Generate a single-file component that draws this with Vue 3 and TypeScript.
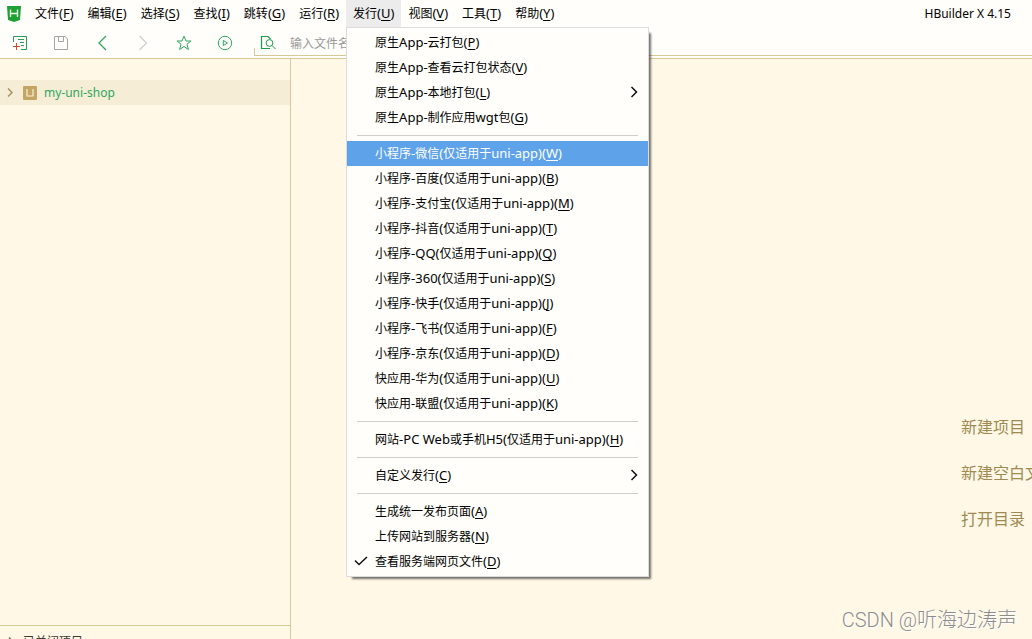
<script setup lang="ts">
import { ref } from 'vue'

interface Command {
  label: string
  key: string
  submenu?: boolean
  checked?: boolean
  active?: boolean
}

interface Run {
  text: string
  latin: boolean
}

const menus: Command[] = [
  { label: '文件', key: 'F' },
  { label: '编辑', key: 'E' },
  { label: '选择', key: 'S' },
  { label: '查找', key: 'I' },
  { label: '跳转', key: 'G' },
  { label: '运行', key: 'R' },
  { label: '发行', key: 'U', active: true },
  { label: '视图', key: 'V' },
  { label: '工具', key: 'T' },
  { label: '帮助', key: 'Y' },
]

const groups: Command[][] = [
  [
    { label: '原生App-云打包', key: 'P' },
    { label: '原生App-查看云打包状态', key: 'V' },
    { label: '原生App-本地打包', key: 'L', submenu: true },
    { label: '原生App-制作应用wgt包', key: 'G' },
  ],
  [
    { label: '小程序-微信(仅适用于uni-app)', key: 'W', active: true },
    { label: '小程序-百度(仅适用于uni-app)', key: 'B' },
    { label: '小程序-支付宝(仅适用于uni-app)', key: 'M' },
    { label: '小程序-抖音(仅适用于uni-app)', key: 'T' },
    { label: '小程序-QQ(仅适用于uni-app)', key: 'Q' },
    { label: '小程序-360(仅适用于uni-app)', key: 'S' },
    { label: '小程序-快手(仅适用于uni-app)', key: 'J' },
    { label: '小程序-飞书(仅适用于uni-app)', key: 'F' },
    { label: '小程序-京东(仅适用于uni-app)', key: 'D' },
    { label: '快应用-华为(仅适用于uni-app)', key: 'U' },
    { label: '快应用-联盟(仅适用于uni-app)', key: 'K' },
  ],
  [{ label: '网站-PC Web或手机H5(仅适用于uni-app)', key: 'H' }],
  [{ label: '自定义发行', key: 'C', submenu: true }],
  [
    { label: '生成统一发布页面', key: 'A' },
    { label: '上传网站到服务器', key: 'N' },
    { label: '查看服务端网页文件', key: 'D', checked: true },
  ],
]

const startLinks: string[] = ['新建项目', '新建空白文件', '打开目录']
const query = ref('')

// Latin runs are set one pixel larger than the Chinese text around them.
function runs(label: string): Run[] {
  const parts = label.match(/[\x20-\x7e]+|[^\x20-\x7e]+/g) ?? []
  return parts.map((text) => ({ text, latin: /^[\x20-\x7e]/.test(text) }))
}
</script>

<template>
  <div class="window">
    <header class="menubar">
      <svg class="logo" width="14" height="16" viewBox="0 0 14 16" aria-hidden="true">
        <path d="M0 0H14L13 14L7 16L1 14Z" fill="#1fa035" />
        <path d="M3.5 3.5V11M10.5 3.5V11M3.5 7.5H10.5" fill="none" stroke="#e9f8e4" stroke-width="1.4" />
      </svg>
      <nav class="menus">
        <div v-for="menu in menus" :key="menu.key" class="menu">
          <button type="button" class="menu-button" :class="{ open: menu.active }">{{ menu.label }}<span class="latin">(<u>{{ menu.key }}</u>)</span></button>
          <div v-if="menu.active" class="popup" role="menu">
            <div v-for="(group, index) in groups" :key="index" class="group">
              <button
                v-for="item in group"
                :key="item.key"
                type="button"
                role="menuitem"
                class="item"
                :class="{ selected: item.active }"
              >
                <span class="mark">
                  <svg v-if="item.checked" width="14" height="10" viewBox="0 0 14 10" aria-hidden="true">
                    <path d="M1 4.5L5 8.5L13 1" fill="none" stroke="#111" stroke-width="1.5" />
                  </svg>
                </span>
                <span class="label"><span v-for="(run, i) in runs(item.label)" :key="i" :class="{ latin: run.latin }">{{ run.text }}</span><span class="latin">(<u>{{ item.key }}</u>)</span></span>
                <svg v-if="item.submenu" width="8" height="12" viewBox="0 0 8 12" aria-hidden="true">
                  <path d="M1.5 1L6.5 6L1.5 11" fill="none" stroke="#111" stroke-width="1.5" />
                </svg>
              </button>
            </div>
          </div>
        </div>
      </nav>
      <span class="title">HBuilder X 4.15</span>
    </header>

    <div class="toolbar">
      <div class="tools">
        <button type="button" class="tool" aria-label="新建">
          <svg width="16" height="16" viewBox="0 0 16 16">
            <path d="M1.5 7V1.5H14.5V14.5H9M6 4.5H12M8 7.5H12M9 10.5H12" fill="none" stroke="#2a9f58" />
            <path d="M4.5 8V15M1 11.5H8" fill="none" stroke="#d9482b" />
          </svg>
        </button>
        <button type="button" class="tool" aria-label="保存">
          <svg width="16" height="16" viewBox="0 0 16 16">
            <path d="M1.5 1.5H12L14.5 4V14.5H1.5ZM5.5 1.5V6.5H10.5V1.5" fill="none" stroke="#a3a3a3" />
          </svg>
        </button>
        <button type="button" class="tool" aria-label="后退">
          <svg width="16" height="16" viewBox="0 0 16 16">
            <path d="M12 1L5 8L12 15" fill="none" stroke="#2fa75f" stroke-width="1.3" />
          </svg>
        </button>
        <button type="button" class="tool" aria-label="前进">
          <svg width="16" height="16" viewBox="0 0 16 16">
            <path d="M4.5 1L11.5 8L4.5 15" fill="none" stroke="#cfcfcf" stroke-width="1.3" />
          </svg>
        </button>
        <button type="button" class="tool" aria-label="收藏">
          <svg width="16" height="16" viewBox="0 0 16 16">
            <path d="M8 1.2L10 6H15L11 9.2L12.4 14.5L8 11.5L3.6 14.5L5 9.2L1 6H6Z" fill="none" stroke="#2fa75f" stroke-linejoin="round" />
          </svg>
        </button>
        <button type="button" class="tool" aria-label="运行">
          <svg width="16" height="16" viewBox="0 0 16 16">
            <circle cx="8" cy="8" r="6.7" fill="none" stroke="#2fa75f" />
            <path d="M6.3 5.4L10.5 8L6.3 10.6Z" fill="none" stroke="#2fa75f" />
          </svg>
        </button>
      </div>
      <label class="search">
        <svg width="16" height="16" viewBox="0 0 16 16" aria-hidden="true">
          <path d="M10 13.5H1.5V1.5H8L10.5 4" fill="none" stroke="#1f9a4c" stroke-width="1.2" />
          <circle cx="9.5" cy="8" r="3.4" fill="none" stroke="#1f9a4c" />
          <path d="M12 10.5L15.5 14" stroke="#1f9a4c" />
        </svg>
        <input v-model="query" type="text" placeholder="输入文件名" aria-label="输入文件名" />
      </label>
    </div>

    <div class="workspace">
      <aside class="sidebar">
        <button type="button" class="project">
          <svg width="6" height="9" viewBox="0 0 6 9" aria-hidden="true">
            <path d="M1 0.5L5 4.5L1 8.5" fill="none" stroke="#a08f66" stroke-width="1.4" />
          </svg>
          <svg width="14" height="14" viewBox="0 0 14 14" aria-hidden="true">
            <rect width="14" height="14" rx="1" fill="#c3a664" />
            <path d="M4 3V10H10V3" fill="none" stroke="#fbf1d6" stroke-width="1.2" />
          </svg>
          <span>my-uni-shop</span>
        </button>
        <button type="button" class="closed">
          <svg width="6" height="9" viewBox="0 0 6 9" aria-hidden="true">
            <path d="M1 0.5L5 4.5L1 8.5" fill="none" stroke="#6d6657" stroke-width="1.3" />
          </svg>
          <span>已关闭项目</span>
        </button>
      </aside>
      <main class="start">
        <nav class="links">
          <a v-for="link in startLinks" :key="link" href="#">{{ link }}</a>
        </nav>
      </main>
    </div>

    <div class="watermark">CSDN @听海边涛声</div>
  </div>
</template>

<style>
body {
  margin: 0;
}
</style>

<style scoped>
.window {
  position: relative;
  display: flex;
  flex-direction: column;
  height: 100vh;
  overflow: hidden;
  background: #fff8e6;
  color: #000;
  font-family: "Noto Sans", "Noto Sans CJK SC", sans-serif;
  font-size: 12px;
}

button,
input {
  margin: 0;
  padding: 0;
  border: 0;
  background: none;
  color: inherit;
  font: inherit;
}

svg {
  display: block;
  flex: none;
}

u {
  text-underline-offset: 2px;
  text-decoration-skip-ink: none;
  text-decoration-thickness: 1px;
}

.latin {
  font-size: 13px;
}

.menubar {
  display: flex;
  align-items: center;
  flex: none;
  height: 27px;
  padding: 0 21px 0 7px;
  background: #fffefa;
}

.menus {
  display: flex;
  flex: 1;
  margin-left: 7px;
}

.menu {
  position: relative;
}

.menu-button {
  height: 27px;
  padding: 0 7px 1px;
  white-space: nowrap;
}

.menu-button.open {
  background: #ececec;
}

.popup {
  position: absolute;
  z-index: 2;
  top: 27px;
  left: 0;
  width: 301px;
  padding: 2px 0;
  border: 1px solid #dcdcdc;
  background: #fffefa;
  box-shadow: 4px 4px 2px -2px rgba(0, 0, 0, 0.55);
}

.group + .group::before {
  content: "";
  display: block;
  height: 1px;
  margin: 5px 10px;
  background: #cfcfcd;
}

.item {
  display: flex;
  align-items: center;
  width: 100%;
  height: 25px;
  padding: 0 10px 1px 0;
  text-align: left;
  white-space: nowrap;
}

.item.selected {
  background: #5ea2ea;
  color: #fff;
}

.mark {
  width: 21px;
  padding-left: 7px;
}

.label {
  flex: 1;
}

.toolbar {
  display: flex;
  flex: none;
  height: 31px;
  border-bottom: 1px solid #d6c994;
  background: #fffefa;
}

.tools {
  display: flex;
  align-items: center;
  gap: 25px;
  width: 242px;
  padding: 1px 0 0 12px;
}

.search {
  position: relative;
  display: flex;
  align-items: center;
  flex: 1;
  gap: 14px;
  height: 24px;
  padding: 4px 0 0 6px;
  border-bottom: 1px solid #d6c994;
}

.search::before {
  content: "";
  position: absolute;
  left: 0;
  bottom: 0;
  width: 1px;
  height: 7px;
  background: #d6c994;
}

.search input {
  flex: 1;
  outline: 0;
}

.search input::placeholder {
  color: #999;
  opacity: 1;
}

.workspace {
  display: flex;
  flex: 1;
  min-height: 0;
}

.sidebar {
  display: flex;
  flex: none;
  flex-direction: column;
  justify-content: space-between;
  width: 290px;
  padding-top: 21px;
  border-right: 1px solid #d6c994;
}

.project {
  display: flex;
  align-items: center;
  height: 25px;
  padding-left: 7px;
  background: #f5edd6;
  color: #2fa75f;
}

.project svg + svg {
  margin: 0 7px 0 10px;
}

.closed {
  display: flex;
  align-items: flex-start;
  gap: 9px;
  height: 14px;
  padding: 6px 0 0 8px;
  border-top: 1px solid #d6c994;
  overflow: hidden;
  color: #3d3a33;
  line-height: 20px;
}

.closed svg {
  margin-top: 5px;
}

.start {
  display: flex;
  flex: 1;
  justify-content: flex-end;
  min-width: 0;
  padding-top: 345px;
}

.links {
  display: flex;
  flex-direction: column;
  width: 71px;
  overflow: hidden;
}

.links a {
  color: #a08a52;
  font-size: 16px;
  line-height: 46px;
  text-decoration: none;
  white-space: nowrap;
}

.watermark {
  position: absolute;
  right: 15px;
  bottom: 4px;
  color: #8c8c8c;
  font-family: Roboto, "Noto Sans CJK SC", sans-serif;
  font-size: 20px;
  font-weight: 300;
  line-height: 30px;
  text-shadow: 1px 1px 0 #fff;
}
</style>
